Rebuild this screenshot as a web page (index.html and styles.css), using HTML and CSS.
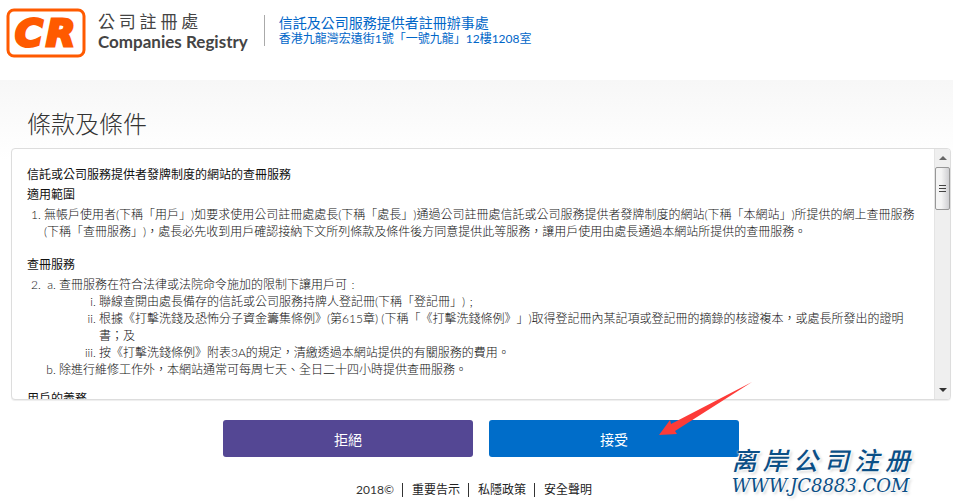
FILE: index.html
```html
<!DOCTYPE html>
<html lang="zh-Hant">
  <head>
    <meta charset="UTF-8">
    <title>條款及條件</title>
    <meta name="viewport" content="width=device-width, initial-scale=1">
    <link rel="stylesheet" href="styles.css">
  </head>
  <body>
    <header class="header">
      <svg class="logo" width="80" height="50" viewBox="0 0 80 50" role="img" aria-label="CR">
        <rect x="2" y="2" width="76" height="46" rx="6" fill="#fff" stroke="#ff5a00" stroke-width="3"/>
        <text class="logo-text" x="9 40" y="38">CR</text>
      </svg>
      <div class="brand">
        <div class="brand-zh">公 司 註 冊 處</div>
        <div class="brand-en">Companies Registry</div>
      </div>
      <div class="office">
        <div class="office-name">信託及公司服務提供者註冊辦事處</div>
        <div class="office-address">香港九龍灣宏遠街1號「一號九龍」12樓1208室</div>
      </div>
    </header>
    <main class="main">
      <h1 class="title">條款及條件</h1>
      <div class="panel">
        <div class="terms">
          <h2>信託或公司服務提供者發牌制度的網站的查冊服務</h2>
          <h3>適用範圍</h3>
          <ol class="clauses">
            <li>無帳戶使用者(下稱「用戶」)如要求使用公司註冊處處長(下稱「處長」)通過公司註冊處信託或公司服務提供者發牌制度的網站(下稱「本網站」)所提供的網上查冊服務(下稱「查冊服務」)，處長必先收到用戶確認接納下文所列條款及條件後方同意提供此等服務，讓用戶使用由處長通過本網站所提供的查冊服務。</li>
          </ol>
          <h3>查冊服務</h3>
          <ol class="clauses nested" start="2">
            <li>
              <ol class="alpha">
                <li>查冊服務在符合法律或法院命令施加的限制下讓用戶可﹕
                  <ol class="roman">
                    <li>聯線查閱由處長備存的信託或公司服務持牌人登記冊(下稱「登記冊」)﹔</li>
                    <li>根據《打擊洗錢及恐怖分子資金籌集條例》(第615章) (下稱「《打擊洗錢條例》」)取得登記冊內某記項或登記冊的摘錄的核證複本，或處長所發出的證明書；及</li>
                    <li>按《打擊洗錢條例》附表3A的規定，清繳透過本網站提供的有關服務的費用。</li>
                  </ol>
                </li>
                <li>除進行維修工作外，本網站通常可每周七天、全日二十四小時提供查冊服務。</li>
              </ol>
            </li>
          </ol>
          <h3>用戶的義務</h3>
        </div>
        <div class="scrollbar" aria-hidden="true">
          <svg class="scroll-arrow" width="8" height="4" viewBox="0 0 8 4"><path d="M0 4 4 0 8 4z" fill="#666"/></svg>
          <div class="thumb"><i></i><i></i><i></i></div>
          <svg class="scroll-arrow down" width="8" height="4" viewBox="0 0 8 4"><path d="M0 0h8L4 4z" fill="#333"/></svg>
        </div>
      </div>
      <div class="actions">
        <button type="button" class="btn reject">拒絕</button>
        <div class="accept-wrap">
          <button type="button" class="btn accept">接受</button>
          <svg class="pointer" width="94" height="54" viewBox="0 0 94 54" aria-hidden="true">
            <path d="M0 53 11 38 12 42 93 0 16 49 18 52z" fill="#fd3b38"/>
          </svg>
        </div>
      </div>
    </main>
    <footer class="footer">
      <span>2018©</span>
      <a href="#">重要告示</a>
      <a href="#">私隱政策</a>
      <a href="#">安全聲明</a>
    </footer>
    <div class="watermark">
      <div class="watermark-name" lang="zh-Hans">离 岸 公 司 注 册</div>
      <div class="watermark-url">WWW.JC8883.COM</div>
    </div>
  </body>
</html>
```
FILE: styles.css
```css
* {
  box-sizing: border-box;
}
body {
  position: relative;
  min-height: 100vh;
  margin: 0;
  overflow: hidden;
  background: #fff;
  color: #333;
  font-family: Lato, "Noto Sans CJK TC", sans-serif;
  font-size: 12px;
  line-height: 17px;
  text-spacing-trim: space-all;
}

/* header */
.header {
  display: flex;
  align-items: flex-start;
  height: 80px;
  padding: 8px 6px;
}
.logo-text {
  fill: #ff5a00;
  stroke: #ff5a00;
  stroke-width: 3px;
  font: italic 700 38px "DejaVu Sans", sans-serif;
}
.brand {
  padding: 3px 16px 0 12px;
  color: #444;
}
.brand-zh {
  font: 400 17px/20px "Noto Sans CJK TC", sans-serif;
}
.brand-en {
  font-size: 17px;
  font-weight: 700;
  line-height: 22px;
}
.office {
  margin-top: 7px;
  padding-left: 14px;
  border-left: 1px solid #aaa;
  color: #0066c8;
}
.office-name {
  font-size: 14px;
  line-height: 16px;
}
.office-address {
  line-height: 15px;
}

/* terms */
.main {
  padding: 28px 2px 0 11px;
  background: linear-gradient(#f7f7f7, #fff 80px);
}
.title {
  margin: 0 0 8px;
  padding-left: 16px;
  font-size: 24px;
  font-weight: 300;
  line-height: 32px;
}
.panel {
  display: flex;
  height: 252px;
  overflow: hidden;
  border: 1px solid #ddd;
  border-radius: 4px;
  background: #fff;
  box-shadow: 0 1px 1px #eee;
}
.terms {
  flex: 1;
  padding: 17px 12px 0 15px;
  overflow: hidden;
  color: #111;
  font-weight: 300;
}
.terms h2,
.terms h3 {
  margin: 0 0 3px;
  font-size: 12px;
  font-weight: 400;
}
.terms ol {
  margin: 0;
}
.terms .clauses {
  margin-bottom: 16px;
  padding-left: 17px;
}
.terms .nested {
  margin-bottom: 12px;
}
.alpha {
  padding-left: 15px;
  list-style: lower-alpha;
}
.roman {
  padding-left: 40px;
  list-style: lower-roman;
}
.scrollbar {
  display: flex;
  flex-direction: column;
  align-items: center;
  width: 16px;
  padding: 7px 0;
  border-left: 1px solid #e4e4e4;
  background: #efefef;
}
.thumb {
  display: flex;
  flex-direction: column;
  align-items: center;
  justify-content: center;
  gap: 2px;
  width: 15px;
  height: 43px;
  margin-top: 7px;
  border: 1px solid #979797;
  border-radius: 2px;
  background: linear-gradient(to right, #f4f4f4 40%, #cfcfd2);
}
.thumb i {
  width: 7px;
  height: 1px;
  background: #444;
}
.down {
  margin-top: auto;
}

/* buttons */
.actions {
  display: flex;
  justify-content: center;
  gap: 16px;
  padding-top: 20px;
}
.btn {
  width: 250px;
  height: 37px;
  padding: 0;
  border: 0;
  border-radius: 3px;
  color: #fff;
  font: 14px Lato, "Noto Sans CJK TC", sans-serif;
}
.reject {
  background: #544794;
}
.accept {
  background: #006dc9;
}
.accept-wrap {
  position: relative;
}
.pointer {
  position: absolute;
  top: -38px;
  left: 170px;
}

/* footer */
.footer {
  display: flex;
  align-items: center;
  justify-content: center;
  padding: 26px 5px 0 0;
  line-height: 14px;
}
.footer a {
  margin-left: 8px;
  padding-left: 9px;
  border-left: 1px solid #333;
  color: #222;
  text-decoration: none;
}
.watermark {
  position: absolute;
  right: 43px;
  bottom: 7px;
  color: #0b4f86;
  font-style: italic;
  text-shadow: 0 0 2px #fff, 1px 1px 2px #fff, 2px 2px 3px #ccc;
}
.watermark-name {
  font-family: "Noto Sans CJK SC", sans-serif;
  font-size: 25px;
  font-weight: 500;
  line-height: 32px;
}
.watermark-url {
  font-family: "DejaVu Serif", serif;
  font-size: 18px;
  line-height: 22px;
}
```
